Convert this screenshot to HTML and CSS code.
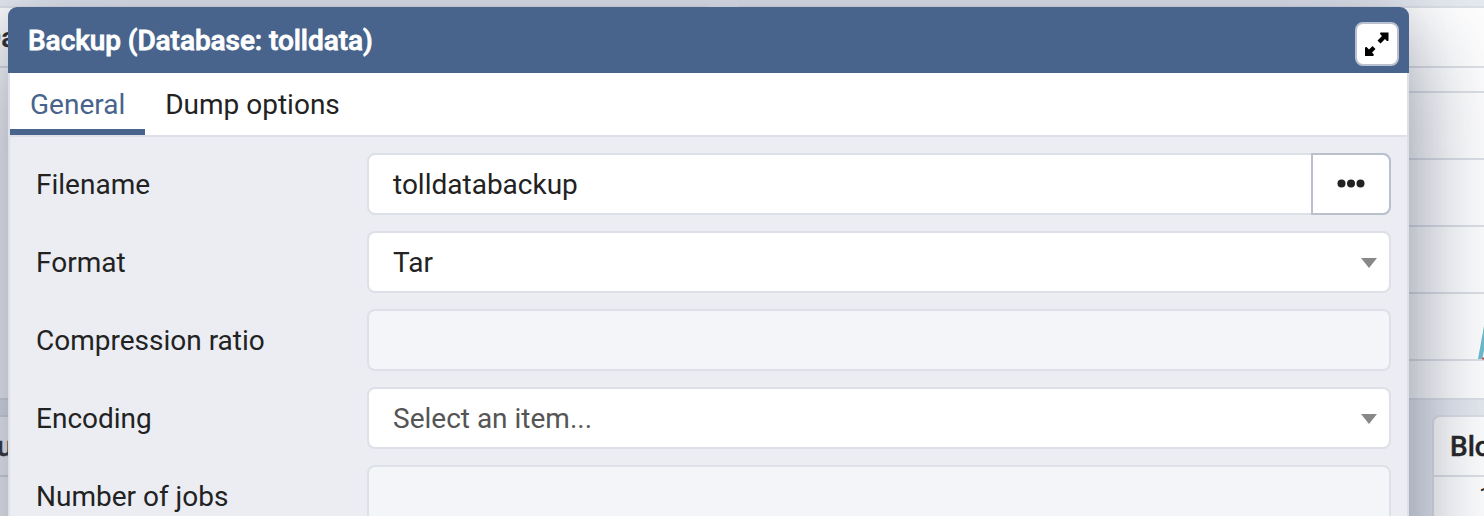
FILE: index.html
```html
<!DOCTYPE html>
<html lang="en">
<head>
<meta charset="utf-8">
<title>Backup</title>
<link rel="stylesheet" href="styles.css">
</head>
<body>
<main class="dashboard">
  <div class="column column-left">
    <section class="card card-top"><h2 class="card-title title-data">Da</h2></section>
    <section class="card card-bottom"><h2 class="card-title title-tuples">Tu</h2></section>
  </div>
  <div class="column column-right">
    <section class="card card-top">
      <div class="card-head"></div>
      <div class="chart-gap"></div>
      <div class="grid-line"></div>
      <div class="grid-line"></div>
      <div class="grid-line"></div>
      <div class="grid-line"></div>
      <svg class="series" width="6" height="38" viewBox="0 0 6 38"><path d="M4 35.500H6" stroke="#d0432b" stroke-width="2"/><path d="M0 36L6 3V27L4.300 36Z" fill="#6bbccd"/></svg>
    </section>
    <section class="card card-bottom">
      <h2 class="card-title">Blo</h2>
      <div class="tick">1</div>
    </section>
  </div>
</main>
<div class="dialog" role="dialog">
  <header class="dialog-head">
    <h1 class="dialog-title">Backup (Database: tolldata)</h1>
    <button class="expand" aria-label="Maximize">
      <svg width="28" height="28" viewBox="0 0 28 28"><path d="M17.500 2.500H25.500V10.500Q24.500 11.500 23.500 10.500L22 9L17.500 13.500L14.500 10.500L19 6L17.500 4.500Q16.500 3 17.500 2.500Z"/><path d="M2 17.500Q3.500 16.500 4.500 18L6 19.500L9.500 16L12.500 19L9 22.500L10.500 24Q11.500 25.500 10 26H2Z"/></svg>
    </button>
  </header>
  <nav class="tabs">
    <span class="tab tab-active">General</span>
    <span class="tab">Dump options</span>
  </nav>
  <form class="form">
    <div class="row"><span class="label">Filename</span><div class="field joined"><span class="value">tolldatabackup</span><span class="browse"><svg width="28" height="10" viewBox="0 0 28 10"><circle cx="4.500" cy="4.500" r="4"/><circle cx="14" cy="4.500" r="4"/><circle cx="23.500" cy="4.500" r="4"/></svg></span></div></div>
    <div class="row"><span class="label">Format</span><div class="field"><span class="value">Tar</span><i class="caret"></i></div></div>
    <div class="row"><span class="label">Compression ratio</span><div class="field disabled"></div></div>
    <div class="row"><span class="label">Encoding</span><div class="field"><span class="value placeholder">Select an item...</span><i class="caret"></i></div></div>
    <div class="row"><span class="label">Number of jobs</span><div class="field disabled"></div></div>
  </form>
</div>
</body>
</html>
```
FILE: styles.css
```css
* { box-sizing: border-box; }
html { overflow: hidden; }
body {
  margin: 0;
  position: relative;
  width: 1484px;
  height: 516px;
  overflow: hidden;
  background: #e6eaf1;
  color: #222;
  font-family: Roboto, "Liberation Sans", sans-serif;
  font-size: 28px;
  line-height: 42px;
}
h1, h2 { margin: 0; font-size: inherit; }
.dashboard {
  display: flex;
  justify-content: space-between;
  height: 516px;
  padding-top: 6px;
}
.column { display: flex; flex-direction: column; gap: 15px; }
.column-left { width: 708px; }
.column-right { width: 746px; }
.card { border: 2px solid #dde0e6; background: #fff; }
.column-left .card { border-left: 0; }
.column-right .card { border-right: 0; }
.card-top { position: relative; flex: 0 0 394px; }
.card-bottom { flex: 1; border-bottom: 0; }
.card-title { height: 60px; padding-top: 9px; border-bottom: 2px solid #dde0e6; font-weight: 500; -webkit-text-stroke: .4px; }
.title-data { text-indent: -17px; }
.title-tuples { text-indent: -19px; }
.card-head { height: 60px; border-bottom: 2px solid #dde0e6; }
.chart-gap { height: 25px; border-bottom: 2px solid #dde0e6; }
.grid-line { height: 67px; border-bottom: 2px solid #dde0e6; }
.series { position: absolute; left: 738px; top: 315px; }
.column-right .card-bottom { margin-left: 694px; border-radius: 8px 0 0 0; overflow: hidden; }
.column-right .card-bottom .card-title { padding-left: 16px; white-space: nowrap; }
.tick { padding-left: 45px; font-size: 24px; line-height: 38px; }
.dialog {
  position: absolute;
  left: 8px;
  top: 7px;
  width: 1401px;
  height: 700px;
  background: #ebedf3;
  border: 2px solid #dde0e6;
  border-top: 0;
  border-radius: 10px;
  box-shadow: 0 36px 100px 6px rgba(75, 85, 110, .58), 0 0 44px rgba(75, 85, 110, .12);
}
.dialog-head {
  display: flex;
  justify-content: space-between;
  height: 66px;
  margin: 0 -2px;
  padding: 15px 10px 0 20px;
  background: #48648c;
  border-radius: 9px 9px 0 0;
  color: #fff;
}
.dialog-title { line-height: 38px; font-weight: 500; letter-spacing: -.07px; -webkit-text-stroke: .8px #fff; }
.expand {
  width: 44px;
  height: 44px;
  padding: 6px;
  border: 2px solid #bac0cd;
  border-radius: 8px;
  background: #fff;
}
.expand svg { display: block; }
.tabs {
  display: flex;
  height: 64px;
  border-bottom: 2px solid #dde0e6;
  background: #fff;
}
.tab { height: 62px; padding: 11px 20px 0; }
.tab-active { color: #48648c; border-bottom: 6px solid #48648c; }
.form { display: flex; flex-direction: column; gap: 16px; padding: 16px 16px 0 26px; }
.row { display: flex; height: 62px; align-items: center; }
.label { width: 331px; padding-top: 2px; }
.value { padding-top: 2px; }
.field {
  display: flex;
  flex: 1;
  align-items: center;
  justify-content: space-between;
  height: 62px;
  padding: 0 12px 0 24px;
  border: 2px solid #dde0e6;
  border-radius: 8px;
  background: #fff;
}
.disabled { background: #f3f5f9; }
.joined { padding-right: 0; }
.placeholder { color: #555; }
.browse {
  display: flex;
  align-items: center;
  justify-content: center;
  width: 80px;
  height: 62px;
  margin-right: -2px;
  border: 2px solid #bac0cd;
  border-radius: 0 8px 8px 0;
  fill: #222;
}
.caret { margin-top: 2px; border: 8px solid transparent; border-top: 10px solid #888; border-bottom: 0; }
```
